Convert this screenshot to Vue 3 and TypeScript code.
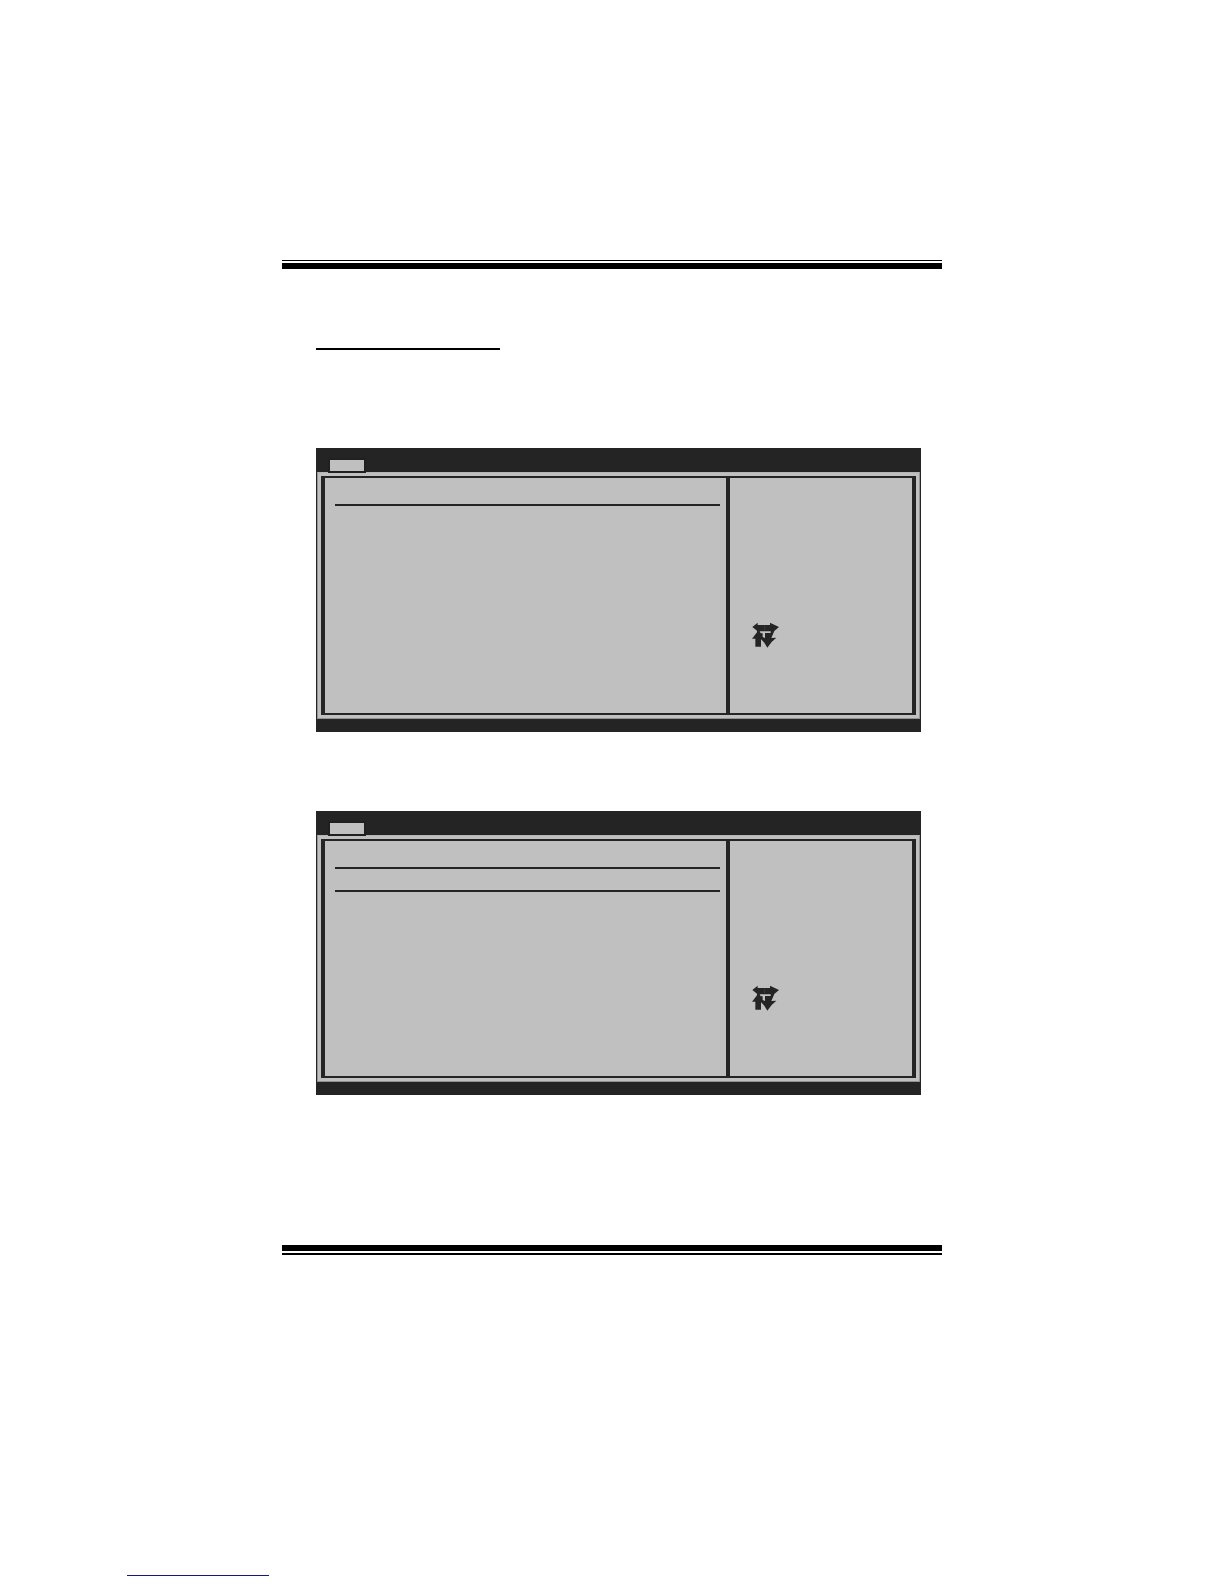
<script setup lang="ts">
interface Screen {
  id: string
  rules: number
}

const screens: Screen[] = [
  { id: 'first', rules: 1 },
  { id: 'second', rules: 2 },
]
</script>

<template>
  <div class="page">
    <header class="band band-top">
      <div class="thin"></div>
      <div class="thick"></div>
    </header>

    <main class="content">
      <div class="title-rule"></div>

      <section v-for="screen in screens" :key="screen.id" class="screen">
        <div class="menu">
          <button type="button" class="tab" aria-label="Menu"></button>
        </div>
        <div class="frame">
          <div class="panes">
            <div class="settings">
              <div v-for="n in screen.rules" :key="n" class="rule"></div>
            </div>
            <aside class="help">
              <svg class="keys" width="50" height="50" viewBox="0 0 150 150" aria-hidden="true">
                <path d="M37 51 L53 38 V45 H90 V38 L117 51 L103 63 L94 84 L109 83 L95 96 L82 113 L73 98 L63 88 V110 H46 V86 H36 L51 67 V62 Z" />
                <path class="gap" d="M59 64 H92 V69 H75 V84 L68 81 V70 H62 Z" />
                <path class="seam" d="M74 47 V60" />
              </svg>
            </aside>
          </div>
        </div>
        <div class="status"></div>
      </section>
    </main>

    <footer class="band band-bottom">
      <div class="thick"></div>
      <div class="thin"></div>
    </footer>
    <a class="link" href="#" aria-label="Link"></a>
  </div>
</template>

<style>
body {
  margin: 0;
  background: #fff;
}
</style>

<style scoped>
.page {
  box-sizing: border-box;
  padding: 260px 282px 8px;
  font-family: "Liberation Sans", sans-serif;
}

.band {
  display: flex;
  flex-direction: column;
  gap: 2px;
}

.thin {
  height: 1px;
  background: #000;
}

.thick {
  height: 6px;
  background: #000;
}

.band-bottom .thin {
  height: 2px;
}

.content {
  display: flex;
  flex-direction: column;
  padding: 79px 21px 150px 34px;
}

.title-rule {
  width: 184px;
  height: 2px;
  margin-bottom: 98px;
  background: #000;
}

.screen {
  background: #242424;
}

.screen + .screen {
  margin-top: 79px;
}

.menu {
  display: flex;
  height: 24px;
  padding-left: 12px;
  align-items: flex-start;
}

.tab {
  position: relative;
  box-sizing: border-box;
  width: 38px;
  height: 15px;
  margin: 10px 0 0;
  padding: 0;
  border: 2px solid #202020;
  border-radius: 0;
  background: #c0c0c0;
}

.frame {
  margin: 0 1px;
  padding: 3px;
  border: 1px solid #929292;
  border-top-color: #b5b5b5;
  background: #c0c0c0;
}

.panes {
  display: flex;
  height: 235px;
  border: 2px solid #242424;
  border-width: 2px 4px;
}

.settings {
  display: flex;
  flex: 1;
  flex-direction: column;
  gap: 21px;
  padding: 26px 6px 0 10px;
}

.rule {
  height: 2px;
  background: #242424;
}

.help {
  width: 182px;
  border-left: 4px solid #242424;
}

.keys {
  display: block;
  margin: 132px 0 0 10px;
  fill: #242424;
}

.gap {
  fill: #c0c0c0;
}

.seam {
  fill: none;
  stroke: #444;
  stroke-width: 2;
}

.status {
  height: 13px;
}

.link {
  display: block;
  width: 142px;
  height: 1px;
  margin: 320px 0 0 -155px;
  background: #17177c;
}
</style>
